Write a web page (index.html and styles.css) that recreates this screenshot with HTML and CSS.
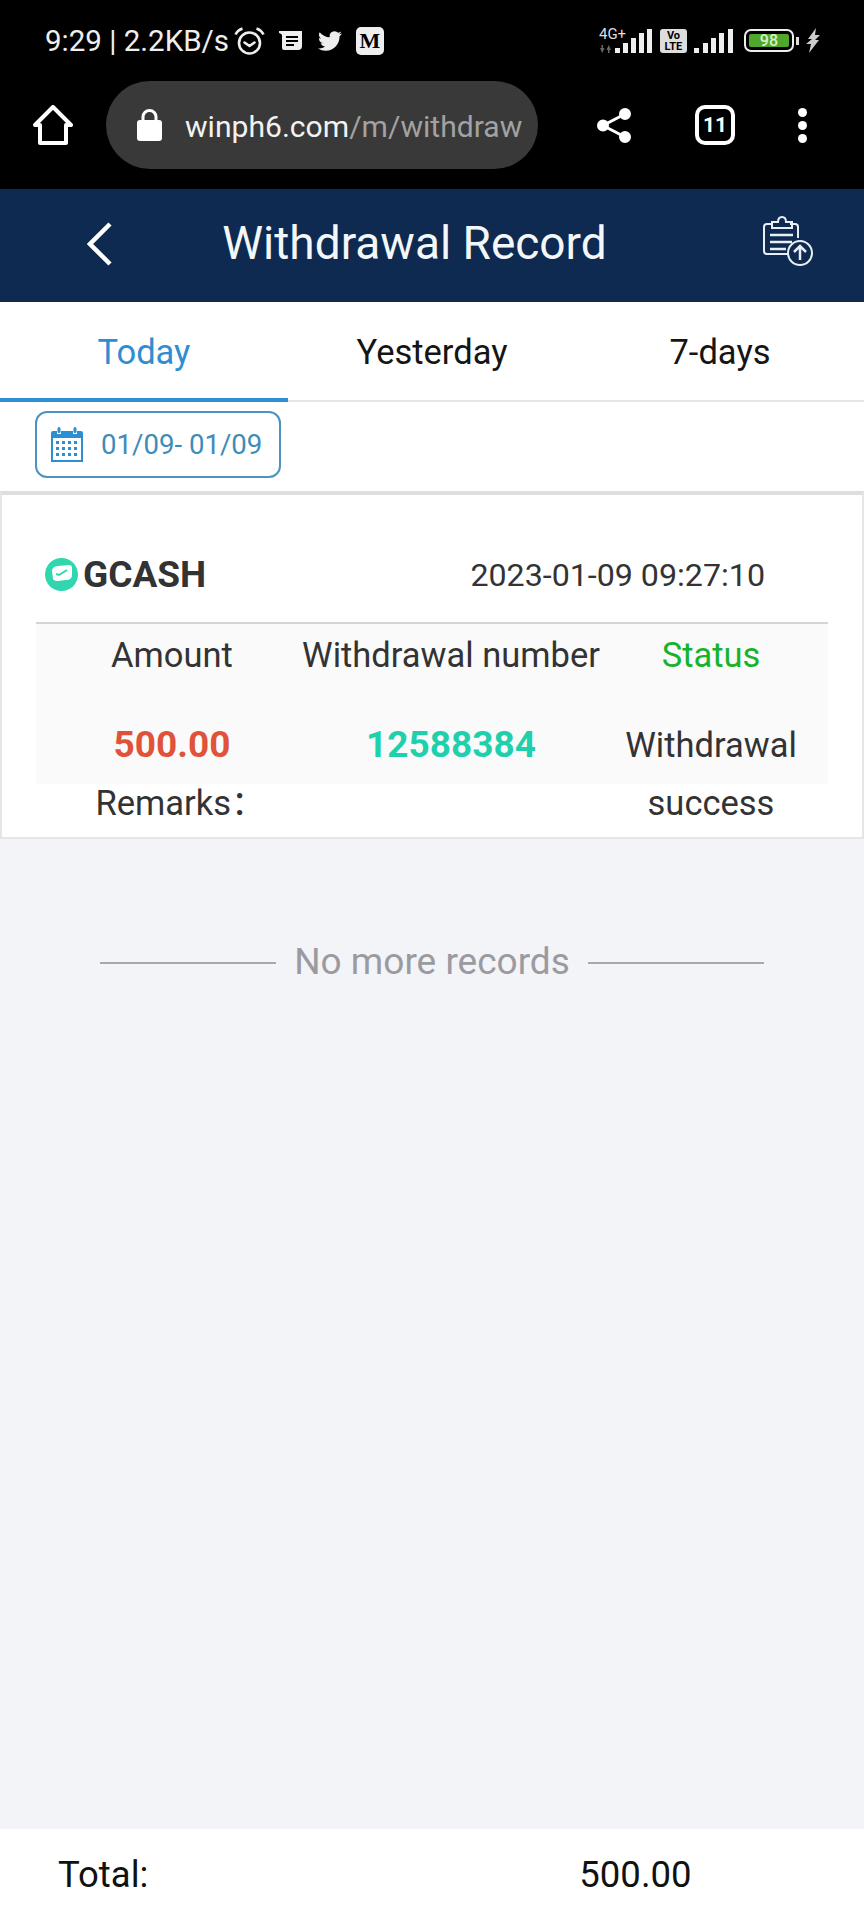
FILE: index.html
```html
<!DOCTYPE html>
<html lang="en">

<head>
    <meta charset="UTF-8">
    <meta name="viewport" content="width=device-width, initial-scale=1.0">
    <title>Withdrawal Record</title>
    <link rel="stylesheet" href="styles.css">
</head>

<body>
    <div class="phone">
        <div class="chrome">
            <div class="status">
                <span class="clock">9:29 | 2.2KB/s</span>
                <svg class="alarm" viewBox="0 0 31 28" fill="none" stroke="#eee" stroke-width="2.6">
                    <circle cx="15.5" cy="16" r="10.5" />
                    <path d="M10.5 15.5l5 3.5 5-3.5" stroke-linecap="round" stroke-linejoin="round" />
                    <path d="M1.5 7.5C3 4.500 5.500 2.500 8.500 1.500M29.500 7.500C28 4.500 25.500 2.500 22.500 1.500" />
                </svg>
                <svg class="note" viewBox="0 0 23 19">
                    <path fill="#eee" d="M0 0h23v15q0 4-4 4H5q-2 0-2-2V4Q3 3 0 2z" />
                    <path fill="#000" d="M7 5h12v2H7zM7 9h12v2H7zM7 13h8v2H7z" />
                </svg>
                <svg class="bird" viewBox="0 0 24 24">
                    <path fill="#eee" d="M23.953 4.570a10 10 0 01-2.825.775 4.958 4.958 0 002.163-2.723c-.951.555-2.005.959-3.127 1.184a4.920 4.920 0 00-8.384 4.482C7.690 8.095 4.067 6.130 1.640 3.162a4.822 4.822 0 00-.666 2.475c0 1.710.870 3.213 2.188 4.096a4.904 4.904 0 01-2.228-.616v.060a4.923 4.923 0 003.946 4.827 4.996 4.996 0 01-2.212.085 4.936 4.936 0 004.604 3.417 9.867 9.867 0 01-6.102 2.105c-.390 0-.779-.023-1.170-.067a13.995 13.995 0 007.557 2.209c9.053 0 13.998-7.496 13.998-13.985 0-.210 0-.420-.015-.630A9.935 9.935 0 0024 4.590z" />
                </svg>
                <span class="medium">M</span>

                <div class="status-right">
                    <div class="net">
                        <span class="net-label">4G+</span>
                        <svg class="arrows" viewBox="0 0 13 8" fill="#666">
                            <path d="M1 3h1.500V0h1.500v3h1.500L3.250 8zM7.500 5H9v3h1.500V5H12L9.750 0z" />
                        </svg>
                    </div>
                    <svg class="bars" viewBox="0 0 37 24" fill="#eee">
                        <rect x="0" y="19" width="5" height="5" />
                        <rect x="8" y="14" width="5" height="10" />
                        <rect x="16" y="9" width="5" height="15" />
                        <rect x="24" y="4" width="5" height="20" />
                        <rect x="32" y="0" width="5" height="24" />
                    </svg>
                    <span class="volte">Vo<br>LTE</span>
                    <svg class="bars bars-two" viewBox="0 0 39 24" fill="#eee">
                        <rect x="0" y="19" width="5" height="5" />
                        <rect x="9" y="14" width="5" height="10" />
                        <rect x="17" y="9" width="5" height="15" />
                        <rect x="25" y="4" width="5" height="20" />
                        <rect x="34" y="0" width="5" height="24" />
                    </svg>
                    <div class="battery"><span class="level">98</span></div>
                    <span class="nib"></span>
                    <svg class="bolt" viewBox="0 0 14 25">
                        <path fill="#ccc" d="M10 0L2 11l4 0-6 5 5 0-2 9 10-13-4 0 5-5-5 0z" />
                    </svg>
                </div>
            </div>

            <div class="toolbar">
                <svg class="home" viewBox="0 0 40 40" fill="none" stroke="#fff" stroke-width="4" stroke-linejoin="round">
                    <path d="M2 20L20 2l18 18h-5v18H7V20z" />
                </svg>
                <div class="url-pill">
                    <svg class="lock" viewBox="0 0 25 32">
                        <path fill="none" stroke="#fff" stroke-width="3" d="M6 13V8a6.500 6.500 0 0113 0v5" />
                        <rect fill="#fff" x="0" y="11" width="25" height="21" rx="3" />
                    </svg>
                    <div class="url">winph6.com<span class="url-path">/m/withdraw</span></div>
                </div>
                <svg class="share" viewBox="0 0 35 37" fill="#fff" stroke="#fff" stroke-width="3">
                    <path d="M28 7L6 18.500 28 30" fill="none" />
                    <circle cx="28" cy="7" r="4.500" />
                    <circle cx="6" cy="18.500" r="4.500" />
                    <circle cx="28" cy="30" r="4.500" />
                </svg>
                <span class="tab-count">11</span>
                <div class="dots"><i></i><i></i><i></i></div>
            </div>
        </div>

        <div class="navbar">
            <svg class="back" viewBox="0 0 25 44" fill="none" stroke="#fff" stroke-width="4.500">
                <path d="M23 2L3 22l20 20" />
            </svg>
            <h1 class="title">Withdrawal Record</h1>
            <svg class="upload" viewBox="0 0 50 50" fill="none" stroke="#e8eef4" stroke-width="2">
                <path d="M27 38H4q-3 0-3-3V11q0-3 3-3h5M27 8h5q3 0 3 3v11" />
                <path d="M9 6h6q0-5 4-5t4 5h6v6H9z" />
                <path d="M7 19h23M7 26h22M7 33h16" stroke-width="2.500" />
                <circle cx="37" cy="37" r="12" fill="#0e2a50" />
                <path d="M37 44V30M31 36l6-6 6 6" stroke-width="2.500" />
            </svg>
        </div>

        <div class="tabs">
            <div class="tab active">Today</div>
            <div class="tab">Yesterday</div>
            <div class="tab">7-days</div>
        </div>

        <div class="filter">
            <div class="date-chip">
                <svg class="calendar" viewBox="0 0 32 35">
                    <path fill="#2d8ed2" d="M0 6q0-2 2-2h4v3h4V4h12v3h4V4h4q2 0 2 2v29H0z" />
                    <rect fill="#2d8ed2" x="6.500" y="0" width="3" height="6" rx="1.500" />
                    <rect fill="#2d8ed2" x="22.500" y="0" width="3" height="6" rx="1.500" />
                    <rect fill="#fff" x="2" y="11" width="28" height="22" />
                    <path fill="#2d8ed2" d="M5 14h3v3H5zM11 14h3v3h-3zM17 14h3v3h-3zM23 14h3v3h-3zM5 20h3v3H5zM11 20h3v3h-3zM17 20h3v3h-3zM23 20h3v3h-3zM5 26h3v3H5zM11 26h3v3h-3zM17 26h3v3h-3zM23 26h3v3h-3z" />
                </svg>
                <span>01/09- 01/09</span>
            </div>
        </div>

        <div class="record">
            <div class="record-head">
                <svg class="gcash-logo" viewBox="0 0 33 33">
                    <circle cx="16.500" cy="16.500" r="16.500" fill="#2fd6ae" />
                    <path fill="#fff" d="M7 13q0-4 5-5l12-1q3 0 3 3v7q0 5-6 5l-8 1q-4 0-5-2z" />
                    <path fill="none" stroke="#2fd6ae" stroke-width="2" d="M11 16l3 1 8-5" />
                </svg>
                <span class="bank">GCASH</span>
                <span class="record-time">2023-01-09 09:27:10</span>
            </div>
            <div class="details">
                <div class="cell label">Amount</div>
                <div class="cell label">Withdrawal number</div>
                <div class="cell label green">Status</div>
                <div class="cell value red">500.00</div>
                <div class="cell value teal">12588384</div>
                <div class="cell state">Withdrawal success</div>
            </div>
            <div class="remarks">Remarks：</div>
        </div>

        <div class="no-more">
            <span class="rule"></span>
            <span>No more records</span>
            <span class="rule"></span>
        </div>

        <div class="total">
            <span>Total:</span>
            <span class="total-sum">500.00</span>
        </div>
    </div>
</body>

</html>
```

FILE: styles.css
```css
* {
    margin: 0;
    padding: 0;
    box-sizing: border-box;
    font-family: Roboto, "Noto Sans CJK SC", sans-serif;
}

body {
    background-color: #f3f4f8;
}

svg {
    display: block;
    flex-shrink: 0;
}

.phone {
    width: 864px;
    height: 1920px;
    display: flex;
    flex-direction: column;
}

/* browser chrome */
.chrome {
    height: 189px;
    background-color: #000;
    color: #eee;
}

.status {
    height: 81px;
    padding-left: 45px;
    display: flex;
    align-items: center;
}

.clock {
    font-size: 29.5px;
    white-space: nowrap;
}

.alarm {
    width: 31px;
    height: 28px;
    margin-left: 5px;
}

.note {
    width: 23px;
    height: 19px;
    margin-left: 14px;
}

.bird {
    width: 26px;
    height: 24px;
    margin-left: 15px;
}

.medium {
    width: 28px;
    height: 28px;
    margin-left: 13px;
    border-radius: 5px;
    background-color: #eee;
    color: #000;
    font-family: "Liberation Serif", serif;
    font-weight: bold;
    font-size: 22px;
    line-height: 28px;
    text-align: center;
}

.status-right {
    margin-left: 215px;
    display: flex;
    align-items: center;
}

.net {
    width: 27px;
    height: 26px;
    margin-top: -2px;
}

.net-label {
    display: block;
    font-size: 15px;
    line-height: 15px;
    color: #ddd;
    white-space: nowrap;
}

.arrows {
    width: 13px;
    height: 8px;
    margin-top: 3px;
}

.bars {
    width: 37px;
    height: 24px;
    margin-left: -11px;
}

.bars-two {
    width: 39px;
    margin-left: 7px;
}

.volte {
    width: 27px;
    height: 24px;
    margin-left: 8px;
    border-radius: 3px;
    background-color: #ddd;
    color: #000;
    font-size: 11px;
    font-weight: bold;
    line-height: 11px;
    text-align: center;
    padding-top: 1px;
}

.battery {
    width: 50px;
    height: 23px;
    margin-left: 11px;
    padding: 3px;
    border: 2px solid #eee;
    border-radius: 7px;
}

.level {
    display: block;
    width: 100%;
    height: 100%;
    background-color: #4fa82b;
    border-radius: 2px;
    color: #d8f0c8;
    font-size: 16px;
    font-weight: 500;
    line-height: 13px;
    text-align: center;
}

.nib {
    width: 3px;
    height: 8px;
    margin-left: 2px;
    background-color: #ddd;
}

.bolt {
    width: 14px;
    height: 25px;
    margin-left: 7px;
}

.toolbar {
    height: 88px;
    padding-left: 33px;
    display: flex;
    align-items: center;
}

.home {
    width: 40px;
    height: 40px;
}

.url-pill {
    width: 432px;
    height: 88px;
    margin-left: 33px;
    padding: 0 16px 0 31px;
    border-radius: 44px;
    background-color: #393939;
    display: flex;
    align-items: center;
}

.lock {
    width: 25px;
    height: 32px;
}

.url {
    margin-left: 23px;
    padding-top: 2px;
    font-size: 30.1px;
    color: #f2f2f2;
    white-space: nowrap;
}

.url-path {
    color: #a2a2a2;
}

.share {
    width: 35px;
    height: 37px;
    margin-left: 59px;
}

.tab-count {
    width: 40px;
    height: 40px;
    margin-left: 63px;
    border: 4px solid #fff;
    border-radius: 10px;
    color: #fff;
    font-size: 21px;
    font-weight: bold;
    line-height: 32px;
    text-align: center;
}

.dots {
    margin-left: 63px;
    display: flex;
    flex-direction: column;
    gap: 4px;
}

.dots i {
    width: 9px;
    height: 9px;
    border-radius: 50%;
    background-color: #fff;
}

/* page header */
.navbar {
    height: 113px;
    padding-left: 87px;
    background-color: #0e2a50;
    display: flex;
    align-items: center;
}

.back {
    width: 25px;
    height: 44px;
    margin-top: -3px;
}

.title {
    width: 583px;
    margin-left: 11px;
    padding-bottom: 5px;
    color: #f4f7fa;
    font-size: 46px;
    font-weight: 400;
    text-align: center;
}

.upload {
    width: 50px;
    height: 50px;
    margin-left: 57px;
    margin-top: -9px;
}

.tabs {
    height: 100px;
    background-color: #fff;
    border-bottom: 2px solid #e5e5e5;
    display: grid;
    grid-template-columns: repeat(3, 1fr);
}

.tab {
    height: 100px;
    font-size: 34.5px;
    line-height: 100px;
    color: #151515;
    text-align: center;
}

.tab.active {
    color: #2d8ed2;
    border-bottom: 4px solid #2d8ed2;
}

.filter {
    height: 89px;
    padding: 9px 0 0 35px;
    background-color: #fff;
}

.date-chip {
    width: 246px;
    height: 67px;
    padding-left: 14px;
    border: 2px solid #4a94bf;
    border-radius: 12px;
    color: #3f8cb8;
    font-size: 27.6px;
    display: flex;
    align-items: center;
    gap: 18px;
}

.calendar {
    width: 32px;
    height: 35px;
}

/* record card */
.record {
    height: 348px;
    background-color: #fff;
    border: 2px solid #e6e6e8;
    border-top-width: 4px;
    border-top-color: #dedede;
    padding: 0 34px;
    color: #333;
}

.record-head {
    height: 127px;
    padding: 31px 0 0 9px;
    display: flex;
    align-items: center;
}

.gcash-logo {
    width: 33px;
    height: 33px;
}

.bank {
    margin-left: 5px;
    font-size: 37px;
    font-weight: bold;
}

.record-time {
    margin-left: auto;
    margin-right: 63px;
    padding-top: 2px;
    font-size: 32.2px;
}

.details {
    height: 162px;
    background-color: #fafafa;
    border-top: 2px solid #d4d4d4;
    display: grid;
    grid-template-columns: 272px 286px 234px;
    grid-template-rows: 64px 96px;
    font-size: 34.5px;
    text-align: center;
}

.label {
    display: flex;
    justify-content: center;
    line-height: 62px;
    white-space: nowrap;
}

.value {
    font-size: 37px;
    font-weight: bold;
    line-height: 58px;
    padding-top: 28px;
}

.state {
    line-height: 58px;
    padding: 28px 20px 0;
}

.green {
    color: #17b32d;
}

.red {
    color: #e0533a;
}

.teal {
    color: #1fd0ad;
}

.remarks {
    width: 272px;
    padding-left: 17px;
    font-size: 34.5px;
    line-height: 38px;
    text-align: center;
    white-space: nowrap;
}

.no-more {
    height: 244px;
    padding: 0 100px;
    color: #9a9aa0;
    font-size: 37px;
    display: flex;
    align-items: center;
    gap: 18px;
    white-space: nowrap;
}

.rule {
    flex: 1;
    height: 2px;
    margin-top: 3px;
    background-color: #a8a8ac;
}

.total {
    margin-top: auto;
    height: 91px;
    padding-left: 58px;
    background-color: #fff;
    color: #111;
    font-size: 36.5px;
    display: flex;
    align-items: center;
}

.total-sum {
    margin-left: 431px;
}
```
